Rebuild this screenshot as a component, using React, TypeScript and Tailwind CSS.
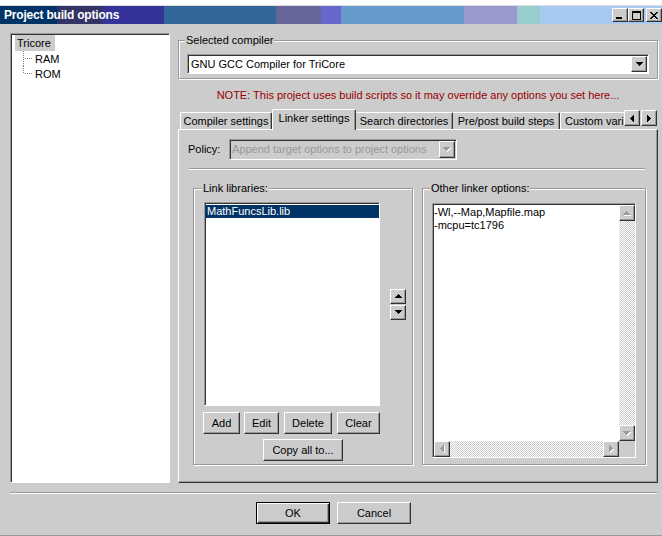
import React from "react";

const RAISED =
  "border border-t-white border-l-white border-r-[#333333] border-b-[#333333] shadow-[inset_-1px_-1px_0_#999999] bg-[#cccccc]";
const SUNKEN =
  "border border-t-[#999999] border-l-[#999999] border-r-white border-b-white shadow-[inset_1px_1px_0_#333333]";
const ETCHED =
  "border border-[#999999] shadow-[inset_1px_1px_0_#ffffff,1px_1px_0_#ffffff]";
const CHECKER =
  "bg-[repeating-conic-gradient(#cccccc_0%_25%,#ffffff_0%_50%)] bg-[length:2px_2px]";

type Dir = "up" | "down" | "left" | "right";

const ARROW_PATHS: Record<Dir, string> = {
  down: "M0 0h7v1H0zM1 1h5v1H1zM2 2h3v1H2zM3 3h1v1H3z",
  up: "M3 0h1v1H3zM2 1h3v1H2zM1 2h5v1H1zM0 3h7v1H0z",
  left: "M3 0h1v7H3zM2 1h1v5H2zM1 2h1v3H1zM0 3h1v1H0z",
  right: "M0 0h1v7H0zM1 1h1v5H1zM2 2h1v3H2zM3 3h1v1H3z",
};

function Arrow({ dir, disabled }: { dir: Dir; disabled?: boolean }) {
  const horiz = dir === "up" || dir === "down";
  const w = (horiz ? 7 : 4) + (disabled ? 1 : 0);
  const h = (horiz ? 4 : 7) + (disabled ? 1 : 0);
  return (
    <svg
      width={w}
      height={h}
      viewBox={`0 0 ${w} ${h}`}
      shapeRendering="crispEdges"
      className="block"
    >
      {disabled && (
        <path d={ARROW_PATHS[dir]} fill="#ffffff" transform="translate(1 1)" />
      )}
      <path d={ARROW_PATHS[dir]} fill={disabled ? "#999999" : "#000000"} />
    </svg>
  );
}

function ArrowButton({
  dir,
  disabled,
  className,
}: {
  dir: Dir;
  disabled?: boolean;
  className: string;
}) {
  return (
    <div className={`${RAISED} flex shrink-0 items-center justify-center ${className}`}>
      <Arrow dir={dir} disabled={disabled} />
    </div>
  );
}

function GroupBox({
  label,
  labelClass,
  className,
  children,
}: {
  label: string;
  labelClass: string;
  className: string;
  children: React.ReactNode;
}) {
  return (
    <div className={`relative ${ETCHED} ${className}`}>
      <span
        className={`absolute -top-[7px] bg-[#cccccc] px-[1px] leading-[13px] whitespace-nowrap ${labelClass}`}
      >
        {label}
      </span>
      {children}
    </div>
  );
}

function Button({ label, className }: { label: string; className: string }) {
  return (
    <div className={`${RAISED} flex shrink-0 items-center justify-center ${className}`}>
      {label}
    </div>
  );
}

function PixelGlyph({ rows, color = "#000000" }: { rows: string[]; color?: string }) {
  const w = rows[0].length;
  const h = rows.length;
  const rects: React.ReactNode[] = [];
  rows.forEach((r, y) =>
    r.split("").forEach((c, x) => {
      if (c === "X") rects.push(<rect key={`${x}-${y}`} x={x} y={y} width={1} height={1} />);
    })
  );
  return (
    <svg width={w} height={h} viewBox={`0 0 ${w} ${h}`} shapeRendering="crispEdges" fill={color} className="block">
      {rects}
    </svg>
  );
}

function TitleBar() {
  return (
    <div className="h-[18px] shrink-0 flex items-center bg-[linear-gradient(90deg,#003366_0_57px,#333366_57px_103px,#333399_103px_164px,#336699_164px_276px,#666699_276px_321px,#6666cc_321px_341px,#6699cc_341px_464px,#9999cc_464px_517px,#99cccc_517px_540px,#a6caf0_540px)]">
      <span className="pl-[4px] text-white font-bold text-[12px] tracking-[-0.2px] leading-[18px] whitespace-nowrap">
        Project build options
      </span>
      <div className="ml-auto flex items-center">
        <div className={`${RAISED} w-[16px] h-[14px] flex items-end justify-start pl-[3px] pb-[2px]`}>
          <PixelGlyph rows={["XXXXXX", "XXXXXX"]} />
        </div>
        <div className={`${RAISED} w-[16px] h-[14px] flex items-center justify-center`}>
          <PixelGlyph
            rows={[
              "XXXXXXXXX",
              "XXXXXXXXX",
              "X.......X",
              "X.......X",
              "X.......X",
              "X.......X",
              "X.......X",
              "X.......X",
              "XXXXXXXXX",
            ]}
          />
        </div>
        <div className={`${RAISED} ml-[2px] w-[16px] h-[14px] flex items-center justify-center`}>
          <PixelGlyph
            rows={[
              "XX....XX",
              ".XX..XX.",
              "..XXXX..",
              "...XX...",
              "..XXXX..",
              ".XX..XX.",
              "XX....XX",
            ]}
          />
        </div>
      </div>
    </div>
  );
}

function TreeChild({ label, last }: { label: string; last?: boolean }) {
  const vEnd = last ? 8 : 15;
  const dots: React.ReactNode[] = [];
  for (let y = 0; y < vEnd; y += 2) dots.push(<rect key={`v${y}`} x={0} y={y} width={1} height={1} />);
  for (let x = 2; x < 10; x += 2) dots.push(<rect key={`h${x}`} x={x} y={7} width={1} height={1} />);
  return (
    <div className="flex h-[15px] items-center">
      <svg width={12} height={15} viewBox="0 0 12 15" shapeRendering="crispEdges" fill="#808080" className="ml-[12px] shrink-0 block">
        {dots}
      </svg>
      <span className="leading-[15px] pt-[2px]">{label}</span>
    </div>
  );
}

function Tree() {
  return (
    <div className={`${SUNKEN} w-[160px] h-[450px] bg-white flex flex-col pt-[1px]`}>
      <div className="ml-[4px] w-[40px] h-[16px] bg-[#cccccc] pl-[2px] leading-[16px]">Tricore</div>
      <TreeChild label="RAM" />
      <TreeChild label="ROM" last />
    </div>
  );
}

function Tab({ label, className, selected }: { label: string; className: string; selected?: boolean }) {
  if (selected) {
    return (
      <div
        className={`relative z-10 -mb-[1px] h-[21px] bg-[#cccccc] border-t border-l border-r border-t-white border-l-white border-r-[#333333] shadow-[inset_-1px_0_0_#999999] rounded-t-[2px] flex justify-center pt-[2px] whitespace-nowrap ${className}`}
      >
        {label}
      </div>
    );
  }
  return (
    <div
      className={`h-[17px] border-t border-l border-r border-t-white border-l-white border-r-[#333333] shadow-[inset_-1px_0_0_#999999] rounded-t-[2px] flex justify-center pt-[2px] whitespace-nowrap ${className}`}
    >
      {label}
    </div>
  );
}

function LinkerPanel() {
  return (
    <div className="flex-1 border border-t-white border-l-white border-r-[#333333] border-b-[#333333] shadow-[inset_-1px_-1px_0_#999999] flex flex-col">
      {/* Policy row */}
      <div className="flex items-center mt-[9px] h-[21px]">
        <span className="ml-[9px] w-[41px]">Policy:</span>
        <div className={`${SUNKEN} w-[228px] h-[21px] flex items-center bg-[#cccccc]`}>
          <span className="flex-1 pl-[2px] text-[#999999] whitespace-nowrap overflow-hidden">
            Append target options to project options
          </span>
          <ArrowButton dir="down" disabled className="w-[16px] h-[17px] mr-[1px]" />
        </div>
      </div>

      {/* separator */}
      <div className="mt-[8px] ml-[10px] w-[456px] h-[2px] border-t border-b border-t-[#999999] border-b-white" />

      {/* groups */}
      <div className="mt-[18px] ml-[14px] flex gap-[9px]">
        <GroupBox
          label="Link libraries:"
          labelClass="left-[8px]"
          className="w-[220px] h-[277px] flex flex-col pl-[10px] pt-[13px]"
        >
          <div className="flex items-center">
            <div className={`${SUNKEN} w-[176px] h-[204px] bg-white pl-[1px] pt-[2px]`}>
              <div className="h-[13px] leading-[13px] bg-[#003366] text-white pl-[1px]">MathFuncsLib.lib</div>
            </div>
            <div className="ml-[10px] flex flex-col gap-[1px]">
              <ArrowButton dir="up" className="w-[16px] h-[15px]" />
              <ArrowButton dir="down" className="w-[16px] h-[15px]" />
            </div>
          </div>
          <div className="mt-[6px] -ml-[1px] flex">
            <Button label="Add" className="w-[37px] h-[22px]" />
            <Button label="Edit" className="ml-[4px] w-[35px] h-[22px]" />
            <Button label="Delete" className="ml-[5px] w-[48px] h-[22px]" />
            <Button label="Clear" className="ml-[5px] w-[43px] h-[22px]" />
          </div>
          <Button label="Copy all to..." className="mt-[5px] ml-[59px] w-[80px] h-[22px]" />
        </GroupBox>

        <GroupBox
          label="Other linker options:"
          labelClass="left-[7px]"
          className="w-[224px] h-[277px] pl-[9px] pt-[14px]"
        >
          <div className={`${SUNKEN} w-[204px] h-[255px] bg-white grid grid-cols-[1fr_16px] grid-rows-[1fr_16px]`}>
            <div className="pl-[1px] pt-[2px] leading-[13px] whitespace-pre overflow-hidden">
              <div>-Wl,--Map,Mapfile.map</div>
              <div>-mcpu=tc1796</div>
            </div>
            <div className="flex flex-col pt-[1px]">
              <ArrowButton dir="up" disabled className="w-[16px] h-[16px]" />
              <div className={`flex-1 ${CHECKER}`} />
              <ArrowButton dir="down" disabled className="w-[16px] h-[16px]" />
            </div>
            <div className="flex pl-[1px]">
              <ArrowButton dir="left" disabled className="w-[16px] h-[16px]" />
              <div className={`flex-1 ${CHECKER}`} />
              <ArrowButton dir="right" disabled className="w-[16px] h-[16px]" />
            </div>
            <div className="bg-[#cccccc]" />
          </div>
        </GroupBox>
      </div>
    </div>
  );
}

function RightColumn() {
  return (
    <div className="w-[480px] flex flex-col pt-[7px]">
      <GroupBox
        label="Selected compiler"
        labelClass="left-[6px]"
        className="w-[480px] h-[39px] pl-[8px] pr-[8px] pt-[13px]"
      >
        <div className={`${SUNKEN} h-[20px] bg-white flex items-center`}>
          <span className="flex-1 pl-[3px] whitespace-nowrap">GNU GCC Compiler for TriCore</span>
          <ArrowButton dir="down" className="w-[16px] h-[16px] mr-[1px]" />
        </div>
      </GroupBox>

      <div className="mt-[9px] h-[14px] leading-[14px] text-center text-[#990000] whitespace-nowrap">
        NOTE: This project uses build scripts so it may override any options you set here...
      </div>

      <div className="mt-[7px] h-[20px] flex items-end pl-[2px]">
        <Tab label="Compiler settings" className="w-[92px]" />
        <Tab label="Linker settings" className="w-[84px]" selected />
        <Tab label="Search directories" className="w-[97px] border-l-0" />
        <Tab label="Pre/post build steps" className="w-[107px] border-l-0" />
        <div className="h-[17px] w-[64px] border-t border-l border-t-white border-l-white rounded-tl-[2px] pt-[2px] pl-[4px] whitespace-nowrap overflow-hidden">
          Custom vari
        </div>
        <div className="self-start mt-[1px] flex gap-[1px]">
          <ArrowButton dir="left" className="w-[16px] h-[16px]" />
          <ArrowButton dir="right" className="w-[16px] h-[16px]" />
        </div>
      </div>

      <LinkerPanel />
    </div>
  );
}

export default function App() {
  return (
    <div className="w-[662px] h-[536px] bg-[#cccccc] overflow-hidden flex flex-col text-[11px] leading-[13px] text-black font-['Liberation_Sans',Arial,sans-serif]">
      <div className="h-[6px] shrink-0 bg-white border-b border-[#dddddd]" />
      <TitleBar />
      <div className="flex flex-col pl-[10px] pt-[9px]">
        <div className="flex gap-[8px] h-[450px]">
          <Tree />
          <RightColumn />
        </div>
        <div className="mt-[9px] w-[647px] h-[2px] border-t border-b border-t-[#999999] border-b-white" />
        <div className="mt-[8px] flex justify-center gap-[7px] w-[647px]">
          <div className="w-[74px] h-[22px] border border-black flex items-center justify-center bg-[#cccccc] shadow-[inset_1px_1px_0_#ffffff,inset_-1px_-1px_0_#333333,inset_-2px_-2px_0_#999999]">
            OK
          </div>
          <Button label="Cancel" className="w-[74px] h-[22px]" />
        </div>
      </div>
      <div className="mt-auto h-[1px] bg-[#999999]" />
    </div>
  );
}
